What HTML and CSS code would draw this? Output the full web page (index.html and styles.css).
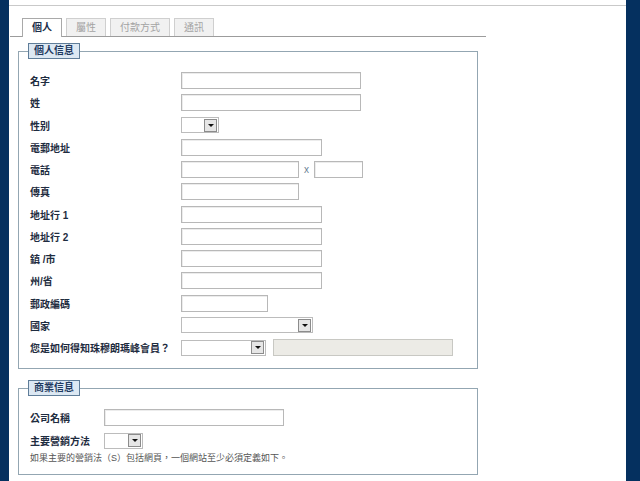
FILE: index.html
```html
<!DOCTYPE html>
<html lang="zh-Hant">
<head>
<meta charset="utf-8">
<title>個人信息</title>
<link rel="stylesheet" href="styles.css">
</head>
<body>
<div class="frame">
  <div class="edge edge-left"></div>
  <div class="main">
    <div class="topbar"></div>
    <ul class="tabs">
      <li class="tab active">個人</li>
      <li class="tab">屬性</li>
      <li class="tab">付款方式</li>
      <li class="tab">通訊</li>
    </ul>

    <fieldset class="box">
      <legend class="box-title">個人信息</legend>
      <div class="rows">
        <div class="row"><span class="label">名字</span><span class="input w180"></span></div>
        <div class="row"><span class="label">姓</span><span class="input w180"></span></div>
        <div class="row"><span class="label">性别</span><span class="select w38"><span class="select-btn"></span></span></div>
        <div class="row"><span class="label">電郵地址</span><span class="input w141"></span></div>
        <div class="row"><span class="label">電話</span><span class="input w118"></span><span class="ext">x</span><span class="input w49"></span></div>
        <div class="row"><span class="label">傳真</span><span class="input w118"></span></div>
        <div class="row"><span class="label">地址行 1</span><span class="input w141"></span></div>
        <div class="row"><span class="label">地址行 2</span><span class="input w141"></span></div>
        <div class="row"><span class="label">鎮 /市</span><span class="input w141"></span></div>
        <div class="row"><span class="label">州/省</span><span class="input w141"></span></div>
        <div class="row"><span class="label">郵政編碼</span><span class="input w87"></span></div>
        <div class="row"><span class="label">國家</span><span class="select w132"><span class="select-btn"></span></span></div>
        <div class="row"><span class="label">您是如何得知珠穆朗瑪峰會員？</span><span class="select w85"><span class="select-btn"></span></span><span class="input disabled w180"></span></div>
      </div>
    </fieldset>

    <fieldset class="box box-business">
      <legend class="box-title">商業信息</legend>
      <div class="rows rows-business">
        <div class="row"><span class="label label-short">公司名稱</span><span class="input w180"></span></div>
        <div class="row"><span class="label label-short">主要營銷方法</span><span class="select w39"><span class="select-btn"></span></span></div>
      </div>
      <p class="note">如果主要的營銷法（S）包括網頁，一個網站至少必須定義如下。</p>
    </fieldset>
  </div>
  <div class="edge edge-right"></div>
</div>
</body>
</html>
```

FILE: styles.css
```css
* { box-sizing: border-box; }

html, body {
  margin: 0;
  padding: 0;
  height: 100%;
  background: #ffffff;
  overflow: hidden;
  font-family: "Liberation Sans", "Noto Sans CJK TC", "Noto Sans CJK SC", sans-serif;
}

.frame {
  display: flex;
  height: 481px;
}

.edge {
  flex: none;
  background: #05305f;
}
.edge-left { width: 9px; }
.edge-right { width: 14px; }

.main {
  flex: 1;
  min-width: 0;
}

.topbar {
  height: 6px;
  border-bottom: 1px solid #c9c9c9;
}

.tabs {
  list-style: none;
  margin: 12px 0 0 1px;
  padding: 0 0 0 12px;
  width: 476px;
  height: 19px;
  display: flex;
  align-items: flex-end;
  gap: 4px;
  border-bottom: 1px solid #9c9c9c;
}

.tab {
  height: 18px;
  padding: 0 9px;
  border: 1px solid #cfcfcf;
  border-bottom: none;
  background: #f1f1f1;
  color: #a3a3a3;
  font-size: 10px;
  line-height: 17px;
  white-space: nowrap;
}

.tab.active {
  height: 19px;
  margin-bottom: -1px;
  background: #ffffff;
  border-color: #a9a9a9;
  color: #1c2f4a;
  font-weight: bold;
}

.box {
  margin: 6px 0 0 9px;
  width: 460px;
  padding: 13px 9px 12px 9px;
  border: 1px solid #93a6b2;
  min-width: 0;
}

.box-business {
  margin-top: 11px;
  padding-bottom: 10px;
}

.box-title {
  padding: 0 5px;
  height: 16px;
  line-height: 14px;
  border: 1px solid #5f7d99;
  background: #dce8f3;
  color: #1f3a60;
  font-size: 10px;
  font-weight: bold;
}

.rows {
  display: flex;
  flex-direction: column;
  gap: 5.25px;
  padding-left: 2px;
}

.rows-business {
  gap: 6px;
}

.row {
  display: flex;
  align-items: center;
  height: 17px;
}

.label {
  flex: none;
  width: 151px;
  font-size: 10px;
  font-weight: bold;
  color: #1e2c40;
  white-space: nowrap;
}

.label-short {
  width: 74px;
}

.input {
  display: block;
  flex: none;
  height: 17px;
  border: 1px solid #b8b8b8;
  box-shadow: inset 1px 1px 0 #ececec;
  background: #ffffff;
}

.input.disabled {
  margin-left: 7px;
  background: #ecebe6;
  border-color: #c8c8c3;
  box-shadow: none;
}

.ext {
  width: 15px;
  text-align: center;
  font-size: 10px;
  color: #6b7f95;
  line-height: 17px;
}

.select {
  display: flex;
  flex: none;
  justify-content: flex-end;
  align-items: center;
  height: 16px;
  padding: 0 1px;
  border: 1px solid #bcbcbc;
  background: #ffffff;
}

.select-btn {
  display: flex;
  align-items: center;
  justify-content: center;
  width: 13px;
  height: 13px;
  background: #e6e6e6;
  border: 1px solid #8c8c8c;
}

.select-btn::after {
  content: "";
  width: 0;
  height: 0;
  border-left: 3px solid transparent;
  border-right: 3px solid transparent;
  border-top: 3px solid #111111;
}

.w180 { width: 180px; }
.w141 { width: 141px; }
.w118 { width: 118px; }
.w87 { width: 87px; }
.w49 { width: 49px; }
.w38 { width: 38px; }
.w39 { width: 39px; }
.w85 { width: 85px; }
.w132 { width: 132px; }

.note {
  margin: 3px 0 0 2px;
  font-size: 9px;
  line-height: 12px;
  color: #555555;
  white-space: nowrap;
}
```
